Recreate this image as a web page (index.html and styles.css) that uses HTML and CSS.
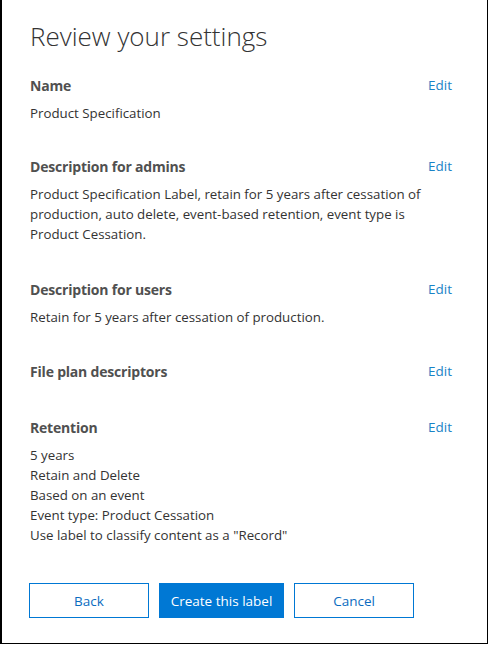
FILE: index.html
```html
<!DOCTYPE html>
<html lang="en">
<head>
<meta charset="utf-8">
<title>Review your settings</title>
<link rel="stylesheet" href="styles.css">
</head>
<body>
<div class="frame">
  <h1 class="title">Review your settings</h1>

  <section class="item item--first">
    <div class="item-head"><h2 class="item-title">Name</h2><a class="edit" href="#">Edit</a></div>
    <div class="item-body">Product Specification</div>
  </section>

  <section class="item item--tall">
    <div class="item-head"><h2 class="item-title">Description for admins</h2><a class="edit" href="#">Edit</a></div>
    <div class="item-body item-body--wrap">Product Specification Label, retain for 5 years after cessation of production, auto delete, event-based retention, event type is Product Cessation.</div>
  </section>

  <section class="item">
    <div class="item-head"><h2 class="item-title">Description for users</h2><a class="edit" href="#">Edit</a></div>
    <div class="item-body">Retain for 5 years after cessation of production.</div>
  </section>

  <section class="item item--empty">
    <div class="item-head"><h2 class="item-title">File plan descriptors</h2><a class="edit" href="#">Edit</a></div>
  </section>

  <section class="item item--last">
    <div class="item-head"><h2 class="item-title">Retention</h2><a class="edit" href="#">Edit</a></div>
    <div class="item-body">
      <div>5 years</div>
      <div>Retain and Delete</div>
      <div>Based on an event</div>
      <div>Event type: Product Cessation</div>
      <div>Use label to classify content as a "Record"</div>
    </div>
  </section>

  <div class="actions">
    <button class="btn">Back</button>
    <button class="btn btn--primary">Create this label</button>
    <button class="btn">Cancel</button>
  </div>
</div>
</body>
</html>
```

FILE: styles.css
```css
* { box-sizing: border-box; }
html, body { margin: 0; padding: 0; background: #fff; }
body {
  font-family: "Open Sans", "Noto Sans", "Liberation Sans", sans-serif;
  color: #333;
}
.frame {
  width: 488px;
  height: 644px;
  border-left: 2px solid #000;
  border-right: 1px solid #000;
  border-bottom: 1px solid #000;
  padding: 18px 35px 0 28px;
}
.title {
  margin: 0 0 21px;
  font-size: 26px;
  line-height: 36px;
  font-weight: 300;
  color: #333;
  letter-spacing: 0;
}
.item { margin-bottom: 34px; }
.item--first { margin-bottom: 33px; }
.item--tall { margin-bottom: 35px; }
.item--empty { margin-bottom: 36px; }
.item--last { margin-bottom: 38px; }
.item-head {
  display: flex;
  justify-content: space-between;
  align-items: center;
  height: 20px;
}
.item-title {
  margin: 0;
  font-size: 14px;
  font-weight: 700;
  color: #505050;
  letter-spacing: -0.2px;
}
.edit {
  font-size: 13.5px;
  color: #1a83c6;
  text-decoration: none;
}
.item-body {
  margin-top: 8px;
  font-size: 13.3px;
  line-height: 20px;
  color: #333;
}
.item-body--wrap { max-width: 410px; }
.actions {
  display: flex;
  gap: 10px;
  margin-left: -1px;
}
.btn {
  height: 35px;
  width: 120px;
  border: 1px solid #0078d4;
  background: #fff;
  color: #0b6cc0;
  font-family: inherit;
  font-size: 13.5px;
  padding: 0;
}
.btn--primary {
  width: 125px;
  background: #0078d4;
  color: #fff;
}
```
